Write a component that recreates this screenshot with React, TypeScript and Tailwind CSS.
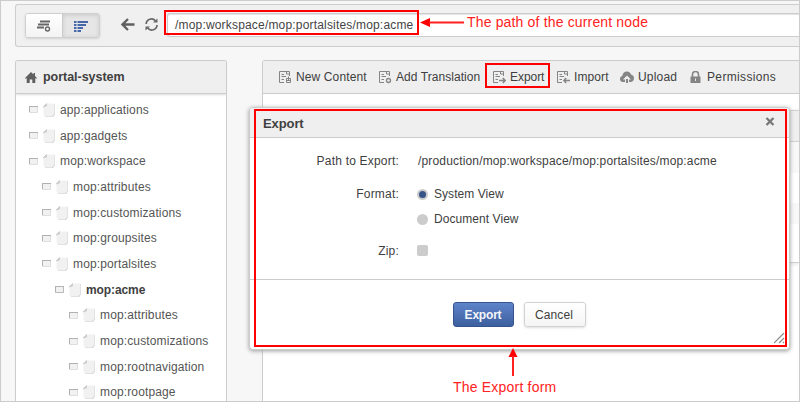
import React from "react";

type IconKind = "new" | "translate" | "export" | "import";

function DocIcon({ kind }: { kind: IconKind }) {
  return (
    <svg width="14" height="14" viewBox="0 0 14 14" fill="none" stroke="#858585" className="block shrink-0">
      <path d="M6 12.5H1.5V1.5H8" />
      <path d="M8 1.500H11.500V6" />
      <path d="M8.500 1.500V4H11.500" />
      <path d="M3.500 4.500H6M3.500 6.500H8M3.500 9.500H6" />
      {kind === "new" && <path d="M8.500 8.500h4v4h-4zM10.500 6.500v4M9 10.500h3" />}
      {kind === "translate" && <circle cx="10.500" cy="10.500" r="2" strokeWidth="1.300" />}
      {kind === "export" && <path d="M7 10.500h6M10.800 8l2.300 2.500L10.800 13" strokeWidth="1.500" />}
      {kind === "import" && <path d="M8 10.500h6M10.200 8l-2.300 2.500 2.300 2.500" strokeWidth="1.500" />}
    </svg>
  );
}

function CloudIcon() {
  return (
    <svg width="14" height="12" viewBox="0 0 14 12" className="block shrink-0">
      <path d="M3 11C1.200 11 0 9.700 0 8c0-1.500 1-2.600 2.300-2.900C2.600 2.400 4.300.5 6.900.5c2 0 3.500 1.200 4.100 3C12.700 3.800 14 5.200 14 7.200 14 9.400 12.400 11 10.500 11H9V8.500h2L7 4.500l-4 4h2V11z" fill="#858585" />
      <path d="M6 8h2v4H6z" fill="#858585" />
    </svg>
  );
}

function LockIcon() {
  return (
    <svg width="11" height="12" viewBox="0 0 11 12" className="block shrink-0">
      <path d="M2.500 6V3.500a3 3 0 0 1 6 0V6" fill="none" stroke="#858585" strokeWidth="1.600" />
      <path d="M.5 5.500h10V12H.5z" fill="#858585" />
      <path d="M5 7.500h1V10H5z" fill="#e8e8e8" />
    </svg>
  );
}

function HomeIcon() {
  return (
    <svg width="12" height="11" viewBox="0 0 12 11" className="block">
      <path d="M6 0l2.500 2.400V1H10v2.900l2 2.100-.8.7-.9-.8V11H7.300V7.500H4.700V11H1.700V5.900l-.9.8L0 6z" fill="#606060" />
    </svg>
  );
}

function Row({ pad, label, bold }: { pad: string; label: string; bold?: boolean }) {
  return (
    <div className={`flex h-[25.700px] shrink-0 items-center ${pad}`}>
      <svg width="9" height="9" viewBox="0 0 9 9" className="block shrink-0">
        <path d="M.5 1.500h8v6h-8z" fill="#f1f1f1" stroke={bold ? "#b8b8b8" : "#dedede"} />
        <path d="M0 1.500h9M.5 1v6" stroke="#b2b2b2" />
      </svg>
      <svg width="12" height="14" viewBox="0 0 12 14" className="ml-[5px] block shrink-0">
        <path d="M3 .5h8.500v13H2L.5 12V4z" fill="#f1f1f1" />
        <path d="M11.500 1v11M2 13.500h8.500" fill="none" stroke="#e2e2e2" />
        <path d="M0 4L3.500.5V3zM9 13.500l2.500-2" fill="#ccc" stroke="#c8c8c8" strokeWidth=".7" />
      </svg>
      <span className={`ml-[5px] whitespace-nowrap ${bold ? "font-bold tracking-[-0.100px] text-[#404040]" : "tracking-[0.130px] text-[#555]"}`}>{label}</span>
    </div>
  );
}

function Tool({ icon, label, className }: { icon: React.ReactNode; label: string; className: string }) {
  return (
    <div className={`flex shrink-0 items-center whitespace-nowrap ${className}`}>
      {icon}
      <span>{label}</span>
    </div>
  );
}

export default function App() {
  return (
    <div className="relative flex h-[402px] w-[800px] flex-col overflow-hidden border border-[#ccc] bg-[#f7f7f7] font-['Liberation_Sans',Arial,sans-serif] text-[12px] leading-[16px] text-[#404040]">
      <header className="ml-[14px] mt-[3px] flex h-[43px] shrink-0 items-start rounded-l-[3px] border border-r-0 border-[#cdcdcd] bg-[#f0f0f0] pt-2">
        <div className="ml-[9px] flex h-[25px] w-[75px] shrink-0 overflow-hidden rounded-[3px] border border-[#d0d0d0] shadow-sm">
          <button className="flex w-9 items-center justify-center bg-gradient-to-b from-white to-[#f3f3f3]">
            <svg width="14" height="12" viewBox="0 0 14 12" fill="none" stroke="#666" className="block">
              <path d="M3 1.500h10M1 4.500h11M0 7.500h7" strokeWidth="1.800" />
              <circle cx="10.500" cy="9" r="2" strokeWidth="1.400" />
            </svg>
          </button>
          <button className="flex flex-1 items-center justify-center border-l border-[#ccc] bg-[#e6e6e6] shadow-[inset_0_1px_4px_#c8c8c8]">
            <svg width="14" height="12" viewBox="0 0 14 12" className="block" stroke="#4668a8" strokeWidth="2">
              <path d="M0 2h2.500M3.500 2H14M0 5h2.500M3.500 5H12M0 8h2.500M3.500 8H9M0 11h2.500M3.500 11H7" />
            </svg>
          </button>
        </div>
        <svg width="14" height="13" viewBox="0 0 14 13" className="ml-[21px] mt-[5px] shrink-0" fill="none" stroke="#606060" strokeWidth="2.300">
          <path d="M13.500 6.500H2M7 1L1.500 6.500 7 12" />
        </svg>
        <svg width="13" height="13" viewBox="0 0 13 13" className="ml-[10px] mt-[5px] shrink-0" fill="none" stroke="#686868" strokeWidth="1.700">
          <path d="M1.200 6A5.200 5.200 0 0 1 10.500 3M12 7a5.200 5.200 0 0 1-9.300 3" />
          <path d="M8 4.500h4.500V.5zM5 8.500H.5v4z" fill="#686868" stroke="none" />
        </svg>
        <div className="ml-[9px] flex h-6 flex-1 items-center rounded-l-[3px] border border-r-0 border-[#ccc] bg-white pl-[7px] text-[#444] shadow-[inset_0_1px_1px_#e4e4e4]">
          <span className="whitespace-nowrap tracking-[0.180px]">/mop:workspace/mop:portalsites/mop:acme</span>
        </div>
      </header>

      <div className="mt-[13px] flex min-h-0 flex-1">
        <aside className="ml-[14px] flex w-[212px] shrink-0 flex-col overflow-hidden rounded-t-[3px] border border-b-0 border-[#ccc] bg-white">
          <div className="flex h-[33px] shrink-0 items-center border-b border-[#ccc] bg-[#efefef] pl-[9px] shadow-[0_1px_2px_#ddd]">
            <HomeIcon />
            <strong className="ml-[6px] text-[12.500px] tracking-[-0.030px]">portal-system</strong>
          </div>
          <nav className="flex flex-col pt-[3px]">
            <Row pad="pl-[13px]" label="app:applications" />
            <Row pad="pl-[13px]" label="app:gadgets" />
            <Row pad="pl-[13px]" label="mop:workspace" />
            <Row pad="pl-[26px]" label="mop:attributes" />
            <Row pad="pl-[26px]" label="mop:customizations" />
            <Row pad="pl-[26px]" label="mop:groupsites" />
            <Row pad="pl-[26px]" label="mop:portalsites" />
            <Row pad="pl-[39px]" label="mop:acme" bold />
            <Row pad="pl-[53px]" label="mop:attributes" />
            <Row pad="pl-[53px]" label="mop:customizations" />
            <Row pad="pl-[53px]" label="mop:rootnavigation" />
            <Row pad="pl-[53px]" label="mop:rootpage" />
          </nav>
        </aside>
        <main className="ml-[35px] flex flex-1 flex-col rounded-tl-[3px] border border-b-0 border-r-0 border-[#ccc] bg-white">
          <div className="flex h-[33px] shrink-0 items-center border-b border-[#ccc] bg-[#efefef] pl-[15px]">
            <Tool className="w-[100px] gap-[4px] tracking-[0.120px]" icon={<DocIcon kind="new" />} label="New Content" />
            <Tool className="w-[114px] gap-[4px] tracking-[0.060px]" icon={<DocIcon kind="translate" />} label="Add Translation" />
            <Tool className="w-[64px] gap-[4px] tracking-[-0.050px]" icon={<DocIcon kind="export" />} label="Export" />
            <Tool className="w-[64px] gap-[4px] tracking-[0.100px]" icon={<DocIcon kind="import" />} label="Import" />
            <Tool className="w-[70px] gap-[4px] tracking-[0.200px]" icon={<CloudIcon />} label="Upload" />
            <Tool className="gap-[6px] tracking-[0.350px]" icon={<LockIcon />} label="Permissions" />
          </div>
          <div className="mt-4 flex flex-col border-b border-t border-[#d0d0d0] shadow-[0_1px_4px_#e2e2e2]">
            <div className="h-[31px] border-b border-[#d0d0d0] bg-[#efefef]" />
            <div className="h-[31px] bg-[#f8f8f8]" />
            <div className="h-[30px] bg-white" />
            <div className="h-[21px] bg-[#f8f8f8]" />
            <div className="h-[38px] bg-white" />
          </div>
        </main>
      </div>

      <section className="absolute left-[248px] top-[106px] flex h-[243px] w-[541px] flex-col overflow-hidden rounded-[4px] border border-[#ccc] bg-white shadow-[0_1px_4px_#999]">
        <div className="flex h-[30px] shrink-0 items-center justify-between border-b border-[#ccc] bg-[#efefef] pl-[13px] pr-[14px] pt-[2px]">
          <strong className="text-[13px] tracking-[-0.100px]">Export</strong>
          <svg width="10" height="9" viewBox="0 0 10 9" className="-mt-[5px]">
            <path d="M1.500 1l7 7M8.500 1l-7 7" stroke="#777" strokeWidth="2.300" />
          </svg>
        </div>
        <div className="grid h-[142px] shrink-0 grid-cols-[149px_1fr] content-start gap-x-[18px] border-b border-[#ccc] pt-[15px] tracking-[0.200px]">
          <span className="h-[33px] text-right">Path to Export:</span>
          <span className="h-[33px] pl-px tracking-[0.160px]">/production/mop:workspace/mop:portalsites/mop:acme</span>
          <span className="h-[25px] text-right">Format:</span>
          <span className="flex h-4 items-center tracking-[0.050px]">
            <i className="mr-[6px] flex size-[11px] items-center justify-center rounded-full bg-[#ccc]">
              <i className="size-[7px] rounded-full bg-[#365488]" />
            </i>
            System View
          </span>
          <span className="h-[32px]" />
          <span className="flex h-4 items-center tracking-[0.060px]">
            <i className="mr-[6px] size-[11px] rounded-full bg-[#ccc]" />
            Document View
          </span>
          <span className="text-right">Zip:</span>
          <i className="mt-[2px] size-[11px] rounded-[2px] bg-[#ccc]" />
        </div>
        <footer className="flex pt-[22px]">
          <button className="ml-[203px] h-[25px] w-[61px] rounded-[3px] border border-[#35548d] bg-gradient-to-b from-[#5e84c9] to-[#3d5f9f] pr-px font-bold tracking-[-0.200px] text-[#f4f6fa]">Export</button>
          <button className="ml-[10px] h-[25px] w-[62px] rounded-[3px] border border-[#d2d2d2] bg-gradient-to-b from-white to-[#f5f5f5] pr-[2px] tracking-[0.100px] shadow-sm">Cancel</button>
        </footer>
        <svg width="11" height="11" viewBox="0 0 11 11" className="absolute bottom-[5px] right-[4px]" stroke="#8b8b8b" strokeWidth="1.200">
          <path d="M0 10L10 0M5 10l5-5M9 10l1-1" />
        </svg>
      </section>

      <div className="absolute left-[163px] top-[9px] h-[25px] w-[255px] border-2 border-[#f00]" />
      <div className="absolute left-[484px] top-[62px] h-[25px] w-[65px] border-2 border-[#f00]" />
      <div className="absolute left-[253px] top-[108px] h-[238px] w-[533px] border-2 border-[#f00]" />
      <svg width="44" height="10" viewBox="0 0 44 10" className="absolute left-[419px] top-[16px]">
        <path d="M0 5.500L10 1v9z" fill="#f00" />
        <path d="M9 5.500h35" stroke="#ff2020" strokeWidth="2" />
      </svg>
      <svg width="10" height="30" viewBox="0 0 10 30" className="absolute left-[507px] top-[346px]">
        <path d="M5 1l4.500 9h-9z" fill="#f00" />
        <path d="M5 9v20" stroke="#ff2020" strokeWidth="2" />
      </svg>
      <span className="absolute left-[466px] top-[12px] whitespace-nowrap text-[14px] leading-[18px] tracking-[0.160px] text-[#f22]">The path of the current node</span>
      <span className="absolute left-[452px] top-[377px] whitespace-nowrap text-[14px] leading-[18px] tracking-[0.200px] text-[#f22]">The Export form</span>
    </div>
  );
}
